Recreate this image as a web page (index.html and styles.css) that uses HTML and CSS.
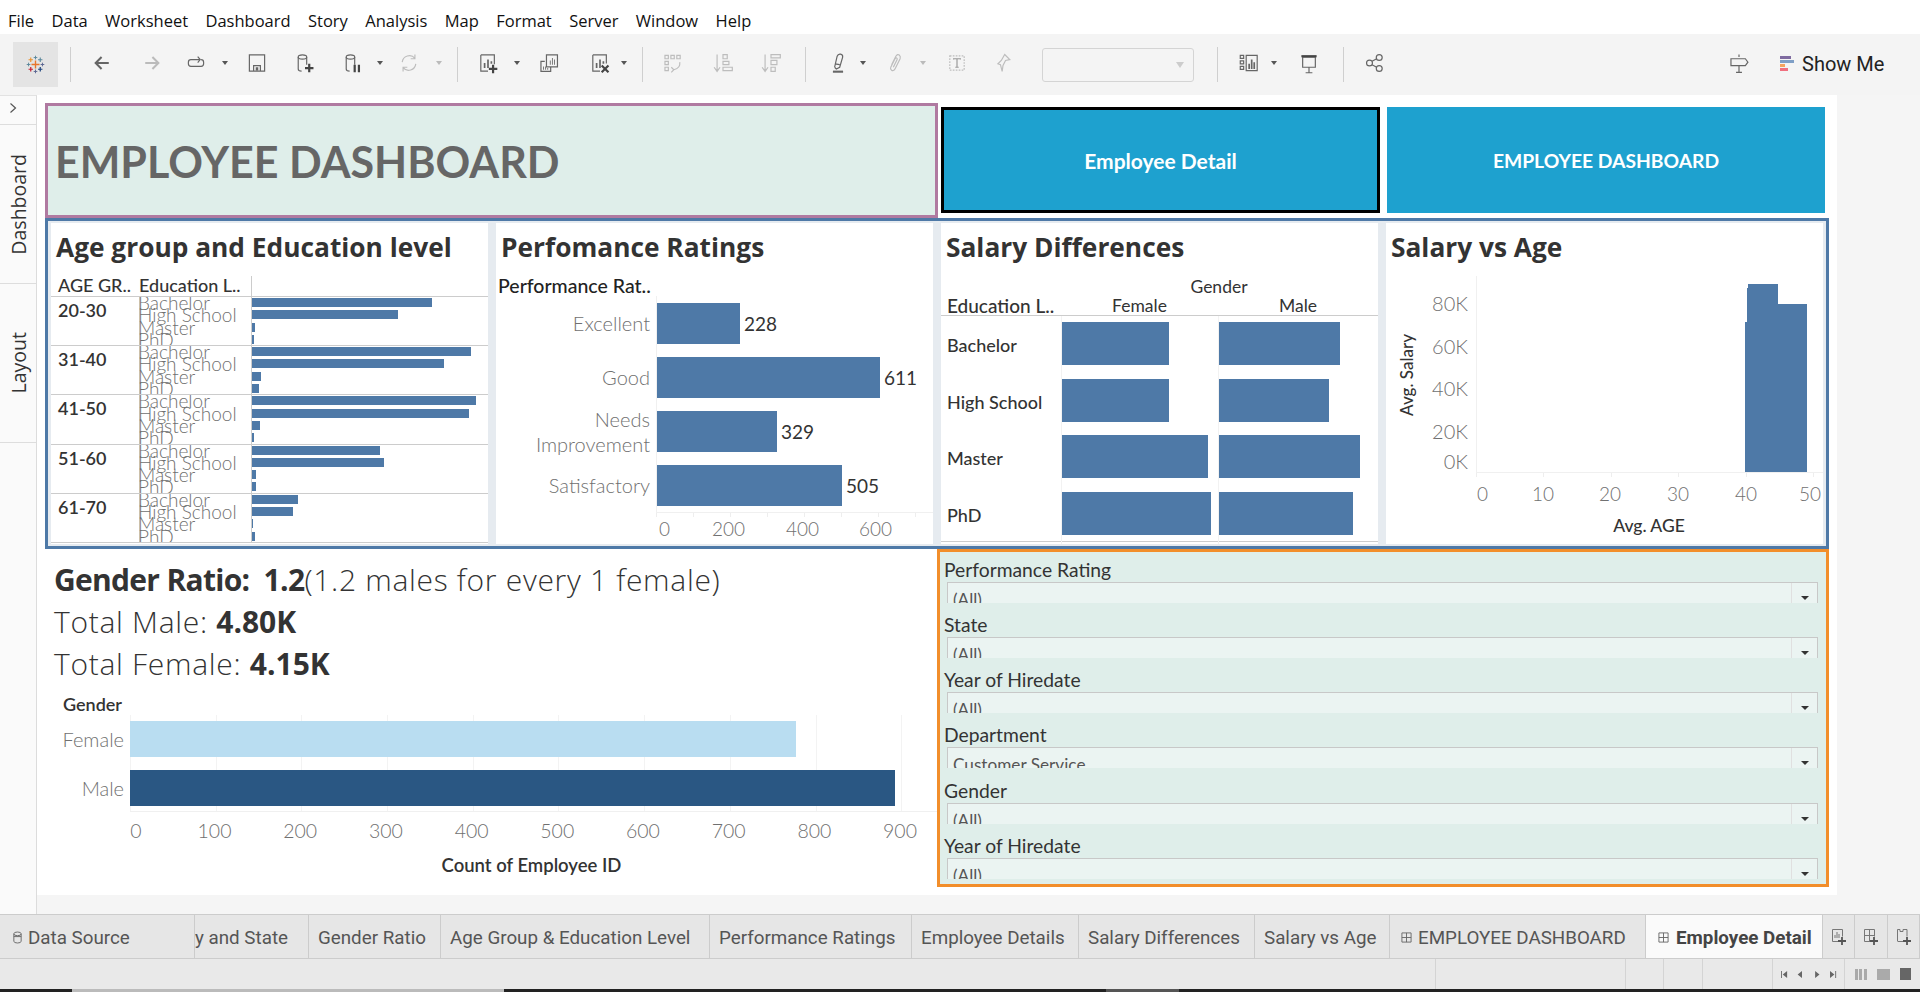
FILE: index.html
```html
<!DOCTYPE html>
<html lang="en">
<head>
<meta charset="utf-8">
<title>Employee Dashboard</title>
<link rel="stylesheet" href="styles.css">
</head>
<body>
<nav class="menubar">
  <span>File</span><span>Data</span><span>Worksheet</span><span>Dashboard</span><span>Story</span><span>Analysis</span><span>Map</span><span>Format</span><span>Server</span><span>Window</span><span>Help</span>
</nav>
<div class="toolbar">
  <div class="logo-box"><svg width="19" height="19" viewBox="0 0 26 26" fill="none" stroke-width="1.3"><path d="M13 7.500v11M7.500 13h11" stroke="#e8762c" stroke-width="1.900"/><path d="M13 1v5M10.500 3.500h5" stroke="#5b879b"/><path d="M13 20v5M10.500 22.500h5" stroke="#5b6591"/><path d="M3.500 10.500v5M1 13h5" stroke="#5b879b"/><path d="M22.500 10.500v5M20 13h5" stroke="#5b6591"/><path d="M6.500 3.500v6M3.500 6.500h6" stroke="#eb912b" stroke-width="1.500"/><path d="M19.500 3.500v6M16.500 6.500h6" stroke="#59879b" stroke-width="1.500"/><path d="M6.500 16.500v6M3.500 19.500h6" stroke="#c72035" stroke-width="1.700"/><path d="M19.500 16.500v6M16.500 19.500h6" stroke="#1f457e" stroke-width="1.700"/></svg></div>
  <i class="sep"></i>
  <svg class="ico" viewBox="0 0 26 26"><path d="M21 13H6M12.500 6l-7 7 7 7" stroke="#666" stroke-width="2.400"/></svg>
  <svg class="ico" viewBox="0 0 26 26"><path d="M5 13h15M13.500 6l7 7-7 7" stroke="#bbb" stroke-width="2.400"/></svg>
  <svg class="ico" viewBox="0 0 26 26"><path d="M17 9H7a3 3 0 0 0-3 3v2a3 3 0 0 0 3 3h12a3 3 0 0 0 3-3v-2a3 3 0 0 0-3-3M15 5.500l3 3.500-3 3.500"/></svg>
  <i class="caret"></i>
  <svg class="ico" viewBox="0 0 26 26"><path d="M4 3.500h18v19H4zM9 22v-6h8v6"/><path class="fill" d="M11.500 18h3v4h-3z"/></svg>
  <svg class="ico" viewBox="0 0 26 26"><ellipse cx="10" cy="6" rx="5" ry="2.500"/><path d="M5 6v14q0 2.500 4 2.500M15 6v9"/><path class="bold" d="M18 14v10M13 19h10"/></svg>
  <svg class="ico" viewBox="0 0 26 26"><ellipse cx="10" cy="6" rx="5" ry="2.500"/><path d="M5 6v14q0 2.500 4 2.500M15 6v9"/><path class="bold" d="M15 15v9M20 15v9"/></svg>
  <i class="caret"></i>
  <svg class="ico off" viewBox="0 0 26 26"><path d="M5 12a8.500 8.500 0 0 1 15-4.500M21 14a8.500 8.500 0 0 1-15 4.500M20 3v5h-5M6 23v-5h5"/></svg>
  <i class="caret off"></i>
  <i class="sep"></i>
  <svg class="ico" viewBox="0 0 26 26"><path d="M4.500 3.500h16v11M13 22.500H4.500v-19"/><path class="fill" d="M8 13h2v6H8zM12 9h2v10h-2zM16 11h2v3h-2z"/><path class="bold" d="M19 15v10M14 20h10"/></svg>
  <i class="caret"></i>
  <svg class="ico" viewBox="0 0 26 26"><path d="M10 3.500h13v14H10zM8 11H3.500v12H15v-5"/><path class="fill" d="M14 10h1v5h-1zM16.500 7h1v8h-1zM19 9h1v6h-1zM6 17h1v4H6zM8.500 17h1v4h-1zM11 19h1v2h-1z"/></svg>
  <svg class="ico" viewBox="0 0 26 26"><path d="M4.500 3.500h16v10M13 22.500H4.500v-19"/><path class="fill" d="M8 13h2v6H8zM12 9h2v10h-2zM16 11h2v3h-2z"/><path class="bold" d="M15 16l8 8M23 16l-8 8"/></svg>
  <i class="caret"></i>
  <i class="sep"></i>
  <svg class="ico off" viewBox="0 0 26 26"><path d="M3.500 4h4v4h-4zM10.500 4h4v4h-4zM17.500 4h4v4h-4zM3.500 11h4v4h-4zM3.500 18h4v4h-4zM21 12q1 7-7 9M11 18l3 3-3 3"/></svg>
  <svg class="ico off" viewBox="0 0 26 26"><path d="M6 3v19M2.500 18l3.500 5 3.500-5M13 3h5v5h-5zM13 11h7v4h-7zM13 18h11v4H13z"/></svg>
  <svg class="ico off" viewBox="0 0 26 26"><path d="M6 3v19M2.500 18l3.500 5 3.500-5M13 3h11v4H13zM13 10h7v5h-7zM13 18h5v5h-5z"/></svg>
  <i class="sep"></i>
  <svg class="ico" viewBox="0 0 26 26"><path d="M9 18l3-13q1-3 4-2.500t2.500 3.500L15 18l-4 2-2-2M9.500 14l5.500 1"/><path class="fill" d="M7 22h12v2.500H7z"/></svg>
  <i class="caret"></i>
  <svg class="ico off" viewBox="0 0 26 26"><path d="M9 15l5-10q2-3 4-1.500t1 4.500l-6 12q-2 3-4 1.500T8 18l5-10q1-1.500 2-1t.5 2L11 18"/></svg>
  <i class="caret off"></i>
  <svg class="ico off" viewBox="0 0 26 26"><path stroke-dasharray="2 1.500" d="M4.500 4.500h17v17h-17z"/><path stroke="#999" d="M9 9V8h8v1M13 8v10M11 18h4"/></svg>
  <svg class="ico off" viewBox="0 0 26 26"><path d="M15 3l6 6-5 1-3 6-1 7-2-8-3-1 4-4z"/></svg>
  <div class="combo"><i class="caret off"></i></div>
  <i class="sep"></i>
  <svg class="ico" viewBox="0 0 26 26"><path d="M1.500 4h4v3.500h-4zM1.500 10.500h4V14h-4zM1.500 17h4v3.500h-4zM8.500 4h13v18h-13z"/><path class="fill" d="M11 14h2v6h-2zM14 9h2v11h-2zM17 12h2v8h-2z"/></svg>
  <i class="caret"></i>
  <svg class="ico" viewBox="0 0 26 26"><path d="M5.500 6h15v12h-15zM13 18v6M9 24.500h8"/><path class="bold" d="M4 5h18"/></svg>
  <i class="sep"></i>
  <svg class="ico" viewBox="0 0 26 26"><circle cx="6.500" cy="13" r="3.500"/><circle cx="18" cy="6.500" r="3.500"/><circle cx="18" cy="19.500" r="3.500"/><path d="M9.500 11l5.500-3M9.500 15l5.500 3"/></svg>
  <svg class="ico" viewBox="0 0 26 26"><path d="M13 3v3M13 16v8M9.500 24h7M3.500 8h17l3 4-3 4h-17z"/></svg>
  <div class="showme">
    <div class="sm-bars"><i class="sm1"></i><i class="sm2"></i><i class="sm3"></i><i class="sm4"></i></div>
    <span>Show Me</span>
  </div>
</div>

<div class="main">
  <aside class="strip">
    <div class="strip-arrow"><svg width="10" height="12" viewBox="0 0 10 12" fill="none" stroke="#555" stroke-width="1.200"><path d="M2.500 1.500l5 4.500-5 4.500"/></svg></div>
    <div class="strip-tab"><span>Dashboard</span></div>
    <div class="strip-tab"><span>Layout</span></div>
  </aside>
  <section class="canvas">
    <div class="toprow">
      <div class="titlebox"><h1>EMPLOYEE DASHBOARD</h1></div>
      <div class="btn btn-active">Employee Detail</div>
      <div class="btn">EMPLOYEE DASHBOARD</div>
    </div>

    <div class="bluebox">
      <article class="panel">
        <h2>Age group and Education level</h2>
        <div class="age-head"><span class="ah1">AGE GR..</span><span class="ah2">Education L..</span><span class="ah3"></span></div>
        <div class="age-row">
          <div class="age-name">20-30</div>
          <div class="age-labels"><span>Bachelor</span><span>High School</span><span>Master</span><span>PhD</span></div>
          <div class="age-bars"><i style="width:180px"></i><i style="width:146px"></i><i style="width:3px"></i><i style="width:2px"></i></div>
        </div>
        <div class="age-row">
          <div class="age-name">31-40</div>
          <div class="age-labels"><span>Bachelor</span><span>High School</span><span>Master</span><span>PhD</span></div>
          <div class="age-bars"><i style="width:219px"></i><i style="width:192px"></i><i style="width:9px"></i><i style="width:7px"></i></div>
        </div>
        <div class="age-row">
          <div class="age-name">41-50</div>
          <div class="age-labels"><span>Bachelor</span><span>High School</span><span>Master</span><span>PhD</span></div>
          <div class="age-bars"><i style="width:224px"></i><i style="width:217px"></i><i style="width:8px"></i><i style="width:2px"></i></div>
        </div>
        <div class="age-row">
          <div class="age-name">51-60</div>
          <div class="age-labels"><span>Bachelor</span><span>High School</span><span>Master</span><span>PhD</span></div>
          <div class="age-bars"><i style="width:128px"></i><i style="width:132px"></i><i style="width:4px"></i><i style="width:4px"></i></div>
        </div>
        <div class="age-row">
          <div class="age-name">61-70</div>
          <div class="age-labels"><span>Bachelor</span><span>High School</span><span>Master</span><span>PhD</span></div>
          <div class="age-bars"><i style="width:46px"></i><i style="width:41px"></i><i style="width:1px"></i><i style="width:3px"></i></div>
        </div>
      </article>

      <article class="panel">
        <h2>Perfomance Ratings</h2>
        <div class="perf-head">Performance Rat..</div>
        <div class="perf-chart">
          <div class="perf-labels"><span>Excellent</span><span>Good</span><span>Needs<br>Improvement</span><span>Satisfactory</span></div>
          <div class="perf-plot">
            <div class="perf-row"><i style="width:83px"></i><b>228</b></div>
            <div class="perf-row"><i style="width:223px"></i><b>611</b></div>
            <div class="perf-row"><i style="width:120px"></i><b>329</b></div>
            <div class="perf-row"><i style="width:185px"></i><b>505</b></div>
          </div>
        </div>
        <div class="perf-ticks"></div>
        <div class="perf-axis"><span>0</span><span>200</span><span>400</span><span>600</span></div>
      </article>

      <article class="panel">
        <h2>Salary Differences</h2>
        <div class="sal-gender">Gender</div>
        <div class="sal-head"><span>Education L..</span><span>Female</span><span>Male</span></div>
        <div class="sal-row"><span class="sal-name">Bachelor</span><div class="sal-cell"><i style="width:107px"></i></div><div class="sal-cell"><i style="width:121px"></i></div></div>
        <div class="sal-row"><span class="sal-name">High School</span><div class="sal-cell"><i style="width:107px"></i></div><div class="sal-cell"><i style="width:110px"></i></div></div>
        <div class="sal-row"><span class="sal-name">Master</span><div class="sal-cell"><i style="width:146px"></i></div><div class="sal-cell"><i style="width:141px"></i></div></div>
        <div class="sal-row"><span class="sal-name">PhD</span><div class="sal-cell"><i style="width:149px"></i></div><div class="sal-cell"><i style="width:134px"></i></div></div>
      </article>

      <article class="panel">
        <h2>Salary vs Age</h2>
        <div class="sva-chart">
          <div class="sva-ytitle"><span>Avg. Salary</span></div>
          <div class="sva-ylabels"><span>80K</span><span>60K</span><span>40K</span><span>20K</span><span>0K</span></div>
          <div class="sva-plot"><i style="width:2px;height:150px"></i><i style="width:1px;height:184px"></i><i style="width:30px;height:188px"></i><i style="width:29px;height:168px"></i></div>
        </div>
        <div class="sva-ticks"></div>
        <div class="sva-axis"><span>0</span><span>10</span><span>20</span><span>30</span><span>40</span><span>50</span></div>
        <div class="sva-xtitle">Avg. AGE</div>
      </article>
    </div>

    <div class="lowerrow">
      <div class="gender">
        <p class="gline gline-ratio"><strong>Gender Ratio:&nbsp; 1.2</strong>(1.2 males for every 1 female)</p>
        <p class="gline">Total Male: <strong>4.80K</strong></p>
        <p class="gline">Total Female: <strong>4.15K</strong></p>
        <div class="g-head">Gender</div>
        <div class="g-chart">
          <div class="g-labels"><span>Female</span><span>Male</span></div>
          <div class="g-plot">
            <i class="g-f" style="width:666px"></i>
            <i class="g-m" style="width:765px"></i>
          </div>
        </div>
        <div class="g-axis"><span>0</span><span>100</span><span>200</span><span>300</span><span>400</span><span>500</span><span>600</span><span>700</span><span>800</span><span>900</span></div>
        <div class="g-title">Count of Employee ID</div>
      </div>
      <div class="filters">
        <div class="filter"><label>Performance Rating</label><div class="select"><span>(All)</span><em><i></i></em></div></div>
        <div class="filter"><label>State</label><div class="select"><span>(All)</span><em><i></i></em></div></div>
        <div class="filter"><label>Year of Hiredate</label><div class="select"><span>(All)</span><em><i></i></em></div></div>
        <div class="filter"><label>Department</label><div class="select"><span>Customer Service</span><em><i></i></em></div></div>
        <div class="filter"><label>Gender</label><div class="select"><span>(All)</span><em><i></i></em></div></div>
        <div class="filter"><label>Year of Hiredate</label><div class="select"><span>(All)</span><em><i></i></em></div></div>
      </div>
    </div>
  </section>
</div>

<div class="tabs">
  <div class="tab t-ds"><svg class="tico" viewBox="0 0 12 14"><ellipse cx="6" cy="3" rx="4" ry="2"/><path d="M2 3v8q0 2 4 2t4-2V3M2 6h8"/></svg>Data Source</div>
  <div class="tab t-clip"><span>Country and State</span></div>
  <div class="tab t-2">Gender Ratio</div>
  <div class="tab t-3">Age Group &amp; Education Level</div>
  <div class="tab t-4">Performance Ratings</div>
  <div class="tab t-5">Employee Details</div>
  <div class="tab t-6">Salary Differences</div>
  <div class="tab t-7">Salary vs Age</div>
  <div class="tab t-8"><svg class="tico" viewBox="0 0 12 12"><path d="M1 1h10v10H1zM6 1v10M1 6h10"/></svg>EMPLOYEE DASHBOARD</div>
  <div class="tab t-9 active"><svg class="tico" viewBox="0 0 12 12"><path d="M1 1h10v10H1zM6 1v10M1 6h10"/></svg>Employee Detail</div>
  <div class="tab t-new"><svg class="nico" viewBox="0 0 18 18"><path d="M2.500 1.500h10v7M8 13.500H2.500v-12"/><path d="M5 10V7M7 10V4M9 10V6"/><path class="nbold" d="M12 9v8M8 13h8"/></svg></div>
  <div class="tab t-new"><svg class="nico" viewBox="0 0 18 18"><path d="M2.500 1.500h10v7M8 13.500H2.500v-12M7.500 1.500v12M2.500 7.500h10"/><path class="nbold" d="M12 9v8M8 13h8"/></svg></div>
  <div class="tab t-new"><svg class="nico" viewBox="0 0 18 18"><path d="M2.500 1.500h2.500v2h3v-2h4v7M8 13.500H3z"/><path d="M2.500 1.500v12"/><path class="nbold" d="M12 9v8M8 13h8"/></svg></div>
</div>

<footer class="status">
  <div class="st"></div><div class="st"></div><div class="st"></div><div class="st"></div><div class="st"></div>
  <div class="st st-nav">
    <svg class="navsvg" viewBox="0 0 64 10"><path d="M0 1h1v8H0zM7 1v8L2 5zM24 1v8l-5-4zM39 1v8l5-4zM56 1v8l5-4zM62 1h1v8h-1z"/></svg>
  </div>
  <div class="st-view">
    <i class="v-grid"></i><i class="v-mid"></i><i class="v-big"></i>
  </div>
</footer>
<div class="taskbar"><i class="k1"></i><i class="k2"></i><i class="k3"></i><i class="k4"></i><i class="k5"></i></div>
</body>
</html>
```
FILE: styles.css
```css
* { box-sizing: border-box; }
html, body { margin: 0; padding: 0; }
body {
  width: 1920px; height: 992px; overflow: hidden;
  display: flex; flex-direction: column;
  font-family: "Lato", "Liberation Sans", sans-serif;
  background: #f5f5f5; color: #333;
}
i { display: block; }

/* menu */
.menubar {
  height: 34px; background: #fff; display: flex; align-items: center;
  padding: 6px 0 0 8px; gap: 17.400px;
  font-family: "Open Sans", sans-serif; font-size: 16.500px; color: #111;
}

/* toolbar: a column per tool, each tool sits at its column's start */
.toolbar {
  height: 61px; background: #f4f4f4; padding-left: 13px;
  display: grid; align-items: center; justify-items: start;
  grid-template-columns: 57px 19px 50px 44px 37px 24px 48px 48px 35px 21px 38px 23px 18px 37px 24px 51px 32px 23px 18px 50px 48px 47px 20px 33px 24px 36px 26px 46px 52px 175px 20px 32px 27px 47px 19px 364px 54px auto;
}
.logo-box { width: 45px; height: 45px; background: #e4e4e4; display: flex; align-items: center; justify-content: center; }
.sep { width: 1px; height: 35px; background: #cfcfcf; }
.ico { width: 22px; height: 22px; margin: -3px 0 0 2px; fill: none; stroke: #666; stroke-width: 1.400; }
.ico .fill { fill: #666; stroke: none; }
.ico .bold { stroke: #444; stroke-width: 2.600; }
.ico.off { stroke: #bdbdbd; }
.caret { width: 0; height: 0; margin: -3px 0 0 2px; border-left: 3.500px solid transparent; border-right: 3.500px solid transparent; border-top: 4px solid #555; }
.caret.off { border-top-color: #bbb; }
.combo { width: 152px; height: 34px; border: 1px solid #d4d4d4; border-radius: 3px; display: flex; align-items: center; justify-content: flex-end; padding-right: 9px; }
.combo .caret { margin-top: 0; border-left-width: 4px; border-right-width: 4px; border-top-width: 6px; border-top-color: #ccc; }
.showme { display: flex; align-items: center; gap: 8px; margin-top: -2px; font-family: "Roboto", sans-serif; font-size: 20px; color: #222; }
.sm-bars { display: flex; flex-direction: column; gap: 1px; width: 14px; }
.sm-bars i { height: 3px; }
.sm1 { background: #7f6ba0; width: 11px; }
.sm2 { background: #7f9fc6; width: 14px; }
.sm3 { background: #f4a460; width: 5px; }
.sm4 { background: #f0707f; width: 8px; }

/* main */
.main { flex: 1; display: flex; min-height: 0; }
.strip { width: 37px; background: #fafafa; border-right: 1px solid #dcdcdc; border-top: 1px solid #e2e2e2; }
.strip-arrow { height: 29px; display: flex; align-items: center; justify-content: center; border-bottom: 1px solid #ddd; padding: 0 10px 4px 0; }
.strip-tab { height: 159px; border-bottom: 1px solid #ddd; display: flex; align-items: center; justify-content: center; }
.strip-tab span { writing-mode: vertical-rl; transform: rotate(180deg); font-family: "Open Sans", sans-serif; font-size: 19.500px; color: #333; }
.canvas { width: 1800px; height: 800px; background: #fff; padding: 8px; display: flex; flex-direction: column; }

.toprow { height: 115px; display: grid; grid-template-columns: 893px 439px 442px; column-gap: 3px; }
.toprow > :last-child { margin-left: 4px; }
.titlebox { background: #dfeeea; border: 3px solid #b07aa1; display: flex; align-items: center; padding: 2px 0 0 7px; }
h1 { margin: 0; font-size: 43px; font-weight: 700; color: #666; }
.btn { margin: 4px 0 5px; background: #1ea1cf; color: #fff; font-weight: 700; font-size: 19.300px; display: flex; align-items: center; justify-content: center; }
.btn-active { border: 3px solid #000; font-size: 21px; }

.bluebox { height: 331px; border: 3px solid #4e79a7; background: #e6ebf0; padding: 2px 3px; display: grid; grid-template-columns: repeat(4, 437px); column-gap: 8px; }
.panel { background: #fff; height: 321px; overflow: hidden; }
h2 { margin: 0; height: 53px; padding: 0 0 0 5px; line-height: 49px; font-family: "Open Sans", sans-serif; font-size: 26.300px; font-weight: 700; color: #333; white-space: nowrap; }

/* age panel */
.age-head { display: grid; grid-template-columns: 88px 112px 1fr; height: 21px; border-bottom: 1px solid #ccc; font-size: 18px; font-weight: 500; line-height: 18px; color: #333; }
.ah1 { padding-left: 7px; }
.ah3 { border-left: 1px solid #ccc; }
.age-row { display: grid; grid-template-columns: 88px 112px 1fr; height: 49.200px; border-bottom: 1px solid #ccc; overflow: hidden; }
.age-name { padding: 1px 0 0 7px; font-size: 18px; font-weight: 600; line-height: 24px; color: #333; }
.age-labels { display: flex; flex-direction: column; border-left: 1px solid #ccc; }
.age-labels span { height: 12.250px; margin-left: -2px; line-height: 12px; font-size: 19px; font-weight: 300; color: #707070; }
.age-bars { border-left: 1px solid #ccc; display: flex; flex-direction: column; gap: 3.300px; padding-top: 1px; }
.age-bars i { height: 9px; background: #4e79a7; }

/* performance panel */
.perf-head { height: 20px; padding-left: 2px; font-size: 19.500px; font-weight: 500; line-height: 20px; color: #222; white-space: nowrap; }
.perf-chart { display: grid; grid-template-columns: 160px 277px; height: 217px; }
.perf-labels { display: flex; flex-direction: column; padding: 7px 6px 0 0; gap: 13px; text-align: right; }
.perf-labels span { height: 41px; display: flex; align-items: center; justify-content: flex-end; font-size: 20px; font-weight: 300; line-height: 25px; color: #707070; }
.perf-plot { border-left: 1px solid #f0f0f0; border-bottom: 1px solid #f0f0f0; padding-top: 7px; display: flex; flex-direction: column; gap: 13px; }
.perf-row { height: 41px; display: flex; align-items: center; gap: 4px; }
.perf-row i { height: 41px; background: #4e79a7; }
.perf-row b { font-weight: 400; font-size: 19px; color: #333; }
.perf-ticks { height: 4px; margin-left: 160px; background: repeating-linear-gradient(90deg, #eee 0 1px, transparent 1px 37px); }
.perf-axis { display: grid; grid-template-columns: 53px 74px 73px auto; padding-left: 163px; font-size: 19px; font-weight: 300; line-height: 24px; color: #707070; }

/* salary panel */
.sal-gender { height: 21px; text-align: center; padding-left: 119px; padding-top: 1px; font-size: 17.500px; line-height: 20px; color: #333; }
.sal-head { height: 20px; margin-top: -1px; display: grid; grid-template-columns: 120px 157px 160px; border-bottom: 1px solid #ccc; font-size: 17.500px; line-height: 20px; color: #333; }
.sal-head span { text-align: center; }
.sal-head span:first-child { text-align: left; padding-left: 6px; font-size: 19px; font-weight: 500; white-space: nowrap; }
.sal-row { height: 56.500px; display: grid; grid-template-columns: 120px 157px 160px; align-items: stretch; }
.sal-row:last-child { border-bottom: 1px solid #ccc; }
.sal-name { padding-left: 6px; font-size: 18px; font-weight: 500; line-height: 58px; color: #333; }
.sal-cell { border-left: 1px solid #f2f2f2; padding-top: 6px; }
.sal-cell i { height: 43px; background: #4e79a7; }

/* salary vs age */
.sva-chart { display: grid; grid-template-columns: 40px 42px 8px 347px; height: 197px; }
.sva-ytitle { display: flex; align-items: center; justify-content: center; }
.sva-ytitle span { writing-mode: vertical-rl; transform: rotate(180deg); font-size: 17px; font-weight: 500; color: #333; }
.sva-ylabels { grid-column: 2; display: grid; padding-top: 17px; grid-template-rows: 43px 42px 43px 30px 20px; justify-items: end; font-size: 20px; font-weight: 300; line-height: 20px; color: #707070; }
.sva-plot { grid-column: 4; border-left: 1px solid #f0f0f0; border-bottom: 1px solid #f0f0f0; display: flex; align-items: flex-end; padding-left: 268px; }
.sva-plot i { background: #4e79a7; }
.sva-ticks { height: 4px; margin-left: 90px; background: repeating-linear-gradient(90deg, #eee 0 1px, transparent 1px 67.400px); }
.sva-axis { height: 24px; margin-top: 5px; display: grid; grid-template-columns: 55px 67px 68px 68px 64px auto; padding-left: 91px; font-size: 19px; font-weight: 300; line-height: 24px; color: #707070; }
.sva-xtitle { margin-top: 9px; width: 526px; text-align: center; font-size: 17.500px; font-weight: 500; color: #333; }

/* lower */
.lowerrow { flex: 1; display: grid; grid-template-columns: 892px 892px; min-height: 0; }
.gender { padding: 10px 0 0 9px; }
.gline { margin: 0; height: 42px; line-height: 42px; font-family: "Open Sans", sans-serif; font-size: 30px; letter-spacing: 0.700px; font-weight: 300; color: #333; white-space: nowrap; }
.gline strong { font-weight: 700; letter-spacing: 0; }
.gline-ratio strong { letter-spacing: -0.700px; }
.g-head { height: 30px; padding: 11px 0 0 9px; font-size: 18px; font-weight: 600; line-height: 16px; color: #333; }
.g-chart { display: grid; grid-template-columns: 76px 1fr; height: 97px; }
.g-labels { display: flex; flex-direction: column; padding: 6px 6px 0 0; gap: 13px; text-align: right; }
.g-labels span { height: 36px; line-height: 36px; font-size: 20px; font-weight: 300; color: #707070; }
.g-plot { padding-top: 6px; display: flex; flex-direction: column; gap: 13px; border-bottom: 1px solid #f0f0f0; background: repeating-linear-gradient(90deg, #f3f3f3 0 1px, transparent 1px 85.700px); }
.g-plot i { height: 36px; }
.g-f { background: #b9ddf1; }
.g-m { background: #2a5783; }
.g-axis { display: grid; grid-template-columns: repeat(10, 85.700px); margin: 6px 0 0 32px; font-size: 19.500px; font-weight: 300; line-height: 26px; color: #707070; text-align: center; }
.g-axis span:first-child { padding-left: 14px; }
.g-title { margin-top: 11px; width: 955px; text-align: center; font-size: 18.500px; font-weight: 600; line-height: 20px; color: #333; }

.filters { border: 3px solid #f28e2b; background: #dfeeea; height: 338px; }
.filter { height: 55px; display: flex; flex-direction: column; justify-content: flex-end; }
.filter:first-child { height: 51px; }
.filter:nth-child(5) { height: 56px; }
.filter label { padding: 0 0 1px 4px; line-height: 22px; font-size: 19.300px; font-weight: 400; color: #333; }
.select { height: 21px; margin: 0 8px 0 7px; display: flex; justify-content: space-between; background: #ebf4f2; border: solid #c8c8c8; border-width: 1.500px 1px 0 1px; overflow: hidden; flex: none; }
.select span { padding: 7px 0 0 5px; font-size: 17.200px; line-height: 20px; color: #555; }
.select em { width: 26px; border-left: 1px solid #e0e0e0; display: flex; justify-content: center; padding-top: 13px; }
.select em i { width: 0; height: 0; border-left: 4px solid transparent; border-right: 4px solid transparent; border-top: 4px solid #333; }

/* tabs */
.tabs { height: 45px; background: #e6e6e6; border-top: 1px solid #ccc; border-bottom: 1px solid #ccc; display: grid; grid-template-columns: 195px 114px 132px 269px 202px 167px 176px 135px 256px 177px 32px 33px 32px; font-family: "Roboto", sans-serif; font-size: 18.800px; color: #555; }
.tab { border-right: 1px solid #ccc; display: flex; align-items: center; padding: 2px 0 0 9px; white-space: nowrap; overflow: hidden; }
.t-ds { padding-left: 12px; gap: 5px; }
.t-clip { padding-left: 0; justify-content: flex-end; padding-right: 20px; }
.t-8 { padding-left: 11px; gap: 6px; }
.t-9 { padding-left: 12px; gap: 7px; }
.active { background: #fafafa; font-weight: 700; color: #444; }
.tico { width: 11px; height: 13px; fill: none; stroke: #666; stroke-width: 1; flex: none; }
.t-new { padding: 0; justify-content: center; }
.nico { width: 18px; height: 18px; fill: none; stroke: #777; stroke-width: 1; }
.nbold { stroke: #555; stroke-width: 1.800; }

.status { height: 30px; background: #e9e9e9; display: grid; grid-template-columns: 1436px 190px 38px 39px 70px 72px 75px; }
.st { border-right: 1px solid #d4d4d4; }
.st-nav { display: flex; align-items: center; justify-content: center; }
.navsvg { width: 56px; height: 9px; fill: #666; }
.st-view { display: flex; align-items: center; gap: 10px; padding-left: 10px; }
.v-grid { width: 12px; height: 11px; background: repeating-linear-gradient(90deg, #aaa 0 3px, transparent 3px 4.500px); }
.v-mid { width: 13px; height: 11px; background: #aaa; }
.v-big { width: 11px; height: 12px; background: #666; }

.taskbar { height: 3px; display: flex; background: #222; }
.k1 { width: 72px; background: #222; }
.k2 { width: 432px; background: #bbb; }
.k3 { width: 602px; background: #222; }
.k4 { width: 73px; background: #555; }
.k5 { flex: 1; background: #222; }
```
